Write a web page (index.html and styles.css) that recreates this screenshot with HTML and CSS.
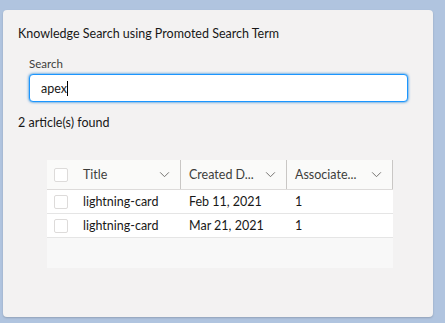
FILE: index.html
```html
<!DOCTYPE html>
<html>
<head>
<meta charset="utf-8">
<link rel="stylesheet" href="styles.css">
</head>
<body>
<div class="card">
  <div class="card-title">Knowledge Search using Promoted Search Term</div>
  <div class="field">
    <label class="label">Search</label>
    <div class="input"><span class="value">apex</span><span class="caret"></span></div>
  </div>
  <div class="count">2 article(s) found</div>
  <div class="table">
    <div class="row head">
      <div class="cell chk"><span class="box"></span></div>
      <div class="cell c1"><span>Title</span><svg class="chev" viewBox="0 0 12 8"><path d="M1 1.5 L6 6.5 L11 1.5" fill="none" stroke="#706e6b" stroke-width="1.1"/></svg></div>
      <div class="cell c2"><span>Created D...</span><svg class="chev" viewBox="0 0 12 8"><path d="M1 1.5 L6 6.5 L11 1.5" fill="none" stroke="#706e6b" stroke-width="1.1"/></svg></div>
      <div class="cell c3"><span>Associate...</span><svg class="chev" viewBox="0 0 12 8"><path d="M1 1.5 L6 6.5 L11 1.5" fill="none" stroke="#706e6b" stroke-width="1.1"/></svg></div>
    </div>
    <div class="row">
      <div class="cell chk"><span class="box"></span></div>
      <div class="cell c1">lightning-card</div>
      <div class="cell c2">Feb 11, 2021</div>
      <div class="cell c3">1</div>
    </div>
    <div class="row">
      <div class="cell chk"><span class="box"></span></div>
      <div class="cell c1">lightning-card</div>
      <div class="cell c2">Mar 21, 2021</div>
      <div class="cell c3">1</div>
    </div>
    <div class="filler"></div>
  </div>
</div>
</body>
</html>
```
FILE: styles.css
```css
html, body { margin: 0; padding: 0; }
body {
  width: 445px; height: 323px;
  background: #b0c4df;
  font-family: "Lato", sans-serif;
  color: #181818;
  overflow: hidden;
}
.card {
  margin: 10px 0 0 3px;
  width: 430px;
  height: 307px;
  box-sizing: border-box;
  background: #f3f2f2;
  border-radius: 4px;
  box-shadow: 0 1px 2px rgba(0,0,0,0.18);
  padding: 16px 0 0 15px;
}
.card-title { font-size: 12.5px; line-height: 16px; color: #181818; }
.field { margin: 15px 0 0 11px; width: 379px; }
.label { display: block; font-size: 11.5px; line-height: 14px; color: #3e3e3c; }
.input {
  margin-top: 3px;
  height: 28px; box-sizing: border-box;
  background: #fff;
  border: 1px solid #1b96ff;
  border-radius: 4px;
  box-shadow: 0 0 3px #0176d3;
  display: flex; align-items: center;
  padding-left: 11px;
  font-size: 12.5px;
}
.caret { display: inline-block; width: 1px; height: 15px; background: #000; margin-left: 0; }
.count { margin-top: 13px; font-size: 12.5px; line-height: 16px; }
.table {
  margin: 29px 0 0 29px;
  width: 346px;
  background: #fff;
}
.row { display: flex; height: 24px; box-sizing: border-box; border-bottom: 1px solid #e5e5e5; font-size: 12.5px; align-items: stretch; }
.row.head { height: 30px; background: #fafaf9; border-bottom: 1px solid #dddbda; }
.cell { display: flex; align-items: center; box-sizing: border-box; }
.chk { width: 36px; padding-left: 7px; }
.c1 { width: 98px; }
.c2 { width: 106px; padding-left: 8px; }
.c3 { width: 106px; padding-left: 8px; }
.head .cell.c1, .head .cell.c2 { border-right: 1px solid #c9c7c5; }
.head .cell.c3 { border-right: 1px solid #c9c7c5; }
.head .cell { justify-content: space-between; padding-right: 10px; color: #3e3e3c; }
.head .chk { padding-right: 0; justify-content: flex-start; }
.box { width: 14px; height: 14px; border: 1px solid #dddbda; border-radius: 2px; background: #fff; box-sizing: border-box; }
.chev { width: 11px; height: 7px; }
.filler { height: 30px; background: #f8f8f8; }
```
